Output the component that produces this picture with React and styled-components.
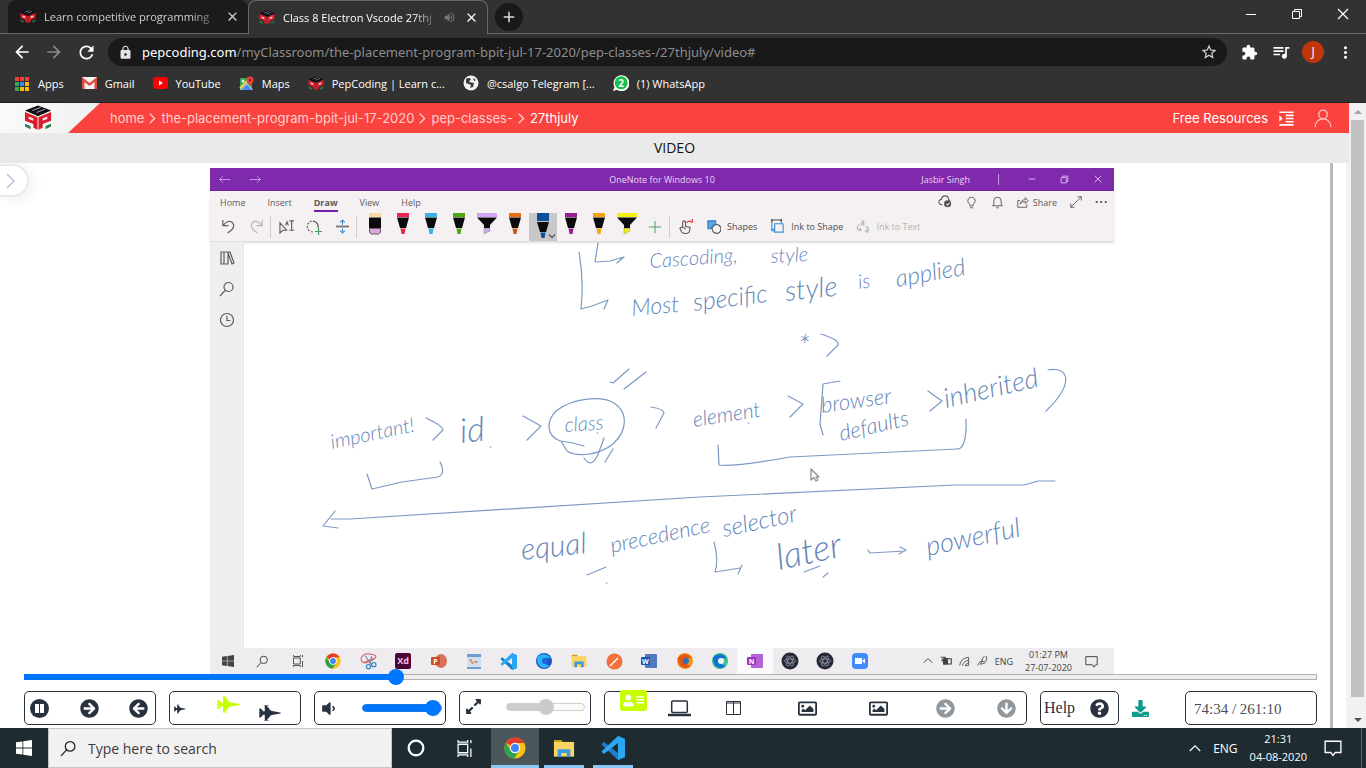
import React from "react";
import styled, { createGlobalStyle, css } from "styled-components";
import {
  MdArrowBack, MdArrowForward, MdRefresh, MdLock, MdStarBorder, MdExtension,
  MdQueueMusic, MdMoreVert, MdClose, MdAdd, MdVolumeUp, MdFormatIndentIncrease,
} from "react-icons/md";
import {
  FaFighterJet, FaArrowCircleRight, FaArrowCircleLeft, FaArrowCircleDown,
  FaQuestionCircle, FaLaptop, FaRegImage, FaAddressCard, FaVolumeDown,
  FaExpandAlt, FaDownload,
} from "react-icons/fa";

const ui = `"Open Sans", "Noto Sans", sans-serif`;
const ink = "#28323f";

const Global = createGlobalStyle`
  * { box-sizing: border-box; }
  body { margin: 0; font-family: ${ui}; font-size: 12px; background: #fff; }
  button { border: 0; padding: 0; background: none; color: inherit; font: inherit; display: flex; align-items: center; justify-content: center; }
  a { color: inherit; text-decoration: none; }
  input { font: inherit; }
  svg { display: block; flex: none; }
`;

const Screen = styled.div`
  display: flex;
  flex-direction: column;
  min-height: 100vh;
`;

/* ---------- browser chrome ---------- */
const TabStrip = styled.div`
  display: flex;
  height: 34px;
  padding-left: 8px;
  background: #323232;
  color: #dcdcdc;
  font-size: 11px;
  box-shadow: inset 0 -1px #686868;
`;
const Tab = styled.div`
  display: flex;
  align-items: center;
  width: 240px;
  padding: 0 8px 0 12px;
  gap: 8px;
  border-radius: 8px 8px 0 0;
  background: ${(p) => (p.$active ? "#323232" : "#1b1b1b")};
  color: ${(p) => (p.$active ? "#fff" : "#cfcfcf")};
  ${(p) =>
    p.$active
      ? css`border: 1px solid #686868; border-bottom: 0; padding-left: 10px;`
      : css`border-bottom: 1px solid #686868;`}
`;
const TabTitle = styled.span`
  flex: 1;
  min-width: 0;
  white-space: nowrap;
  mask-image: linear-gradient(to right, #000 85%, #0003);
`;
const NewTab = styled.button`
  width: 28px;
  height: 28px;
  margin: 3px auto 0 7px;
  border-radius: 50%;
  background: #191919;
`;
const WindowButton = styled.button`
  width: 46px;
  height: 28px;
  color: #fff;
`;
const Toolbar = styled.div`
  display: flex;
  align-items: center;
  height: 32px;
  padding: 4px 5px 0 6px;
  background: #323232;
  color: #fff;
`;
const ToolButton = styled.button`
  width: 32px;
  height: 28px;
  color: ${(p) => (p.$dim ? "#8a8a8a" : "#fff")};
`;
const Omnibox = styled.div`
  display: flex;
  align-items: center;
  flex: 1;
  height: 28px;
  margin: 0 6px;
  padding: 0 9px 0 10px;
  border-radius: 14px;
  background: #191919;
  font-family: "Noto Sans", sans-serif;
  font-size: 13px;
`;
const Domain = styled.label`
  margin-left: 9px;
`;
const UrlInput = styled.input`
  flex: 1;
  min-width: 0;
  border: 0;
  padding: 0;
  background: none;
  color: #8d8d8d;
  outline: 0;
`;
const Avatar = styled.span`
  width: 22px;
  height: 22px;
  border-radius: 50%;
  background: #bf360c;
  line-height: 22px;
  text-align: center;
`;
const Bookmarks = styled.nav`
  display: flex;
  align-items: center;
  gap: 18px;
  height: 37px;
  padding: 0 0 2px 15px;
  background: #323232;
  border-bottom: 1px solid #222;
  color: #fff;
  font-size: 11px;
`;
const Bookmark = styled.a`
  display: flex;
  align-items: center;
  gap: 8px;
`;

/* ---------- page ---------- */
const Page = styled.main`
  display: flex;
  flex: 1;
`;
const Content = styled.div`
  display: flex;
  flex-direction: column;
  flex: 1;
  min-width: 0;
`;
const SiteHeader = styled.header`
  display: flex;
  align-items: center;
  height: 30px;
  background: #fa423e;
  color: #fff;
  font-family: Inter, "Liberation Sans", sans-serif;
  font-size: 13px;
`;
const LogoArea = styled.a`
  width: 100px;
  height: 30px;
  padding: 2px 0 0 24px;
  background: linear-gradient(100deg, #fafafa, #eef0ef);
  clip-path: polygon(0 0, 100% 0, 68% 100%, 0 100%);
`;
const Crumbs = styled.nav`
  display: flex;
  align-items: center;
  gap: 3px;
  flex: 1;
  padding-left: 10px;
`;
const Crumb = styled.a`
  color: ${(p) => (p.$current ? "#fff" : "#ffcfcd")};
`;
const Resources = styled.a`
  display: flex;
  align-items: center;
  gap: 9px;
`;
const Account = styled.button`
  margin: 0 17px 0 18px;
  color: #ffc9c6;
`;
const SectionTitle = styled.h1`
  margin: 0;
  height: 30px;
  background: #eaeaea;
  color: #111;
  font-size: 14px;
  font-weight: 400;
  line-height: 30px;
  text-align: center;
`;
const Body = styled.section`
  position: relative;
  flex: 1;
  margin-right: 3px;
  padding-right: 13px;
  box-shadow: 3px 0 #f4f4f4;
`;
const Player = styled.div`
  height: 100%;
  padding: 5px 13px 3px 24px;
  border-right: 3px solid #b4bcbc;
`;
const Drawer = styled.button`
  position: absolute;
  left: 0;
  top: 1px;
  width: 29px;
  height: 33px;
  padding-right: 6px;
  border: 2px solid #e9e9e9;
  border-left: 0;
  border-radius: 0 17px 17px 0;
  background: #fff;
  box-shadow: 4px 2px 14px #0001;
  color: #b9b6cf;
`;
const Scrollbar = styled.div`
  display: flex;
  flex-direction: column;
  align-items: center;
  width: 17px;
  background: #f1f1f1;
`;
const ScrollArrow = styled.button`
  height: 17px;
  width: 17px;
  color: ${(p) => (p.$off ? "#a3a3a3" : "#505050")};
`;
const Thumb = styled.div`
  width: 13px;
  flex: 1;
  margin-bottom: 14px;
  background: #c1c1c1;
`;

/* ---------- video: the shared note window ---------- */
const VideoHolder = styled.div`
  padding-right: 17px;
`;
const Video = styled.div`
  width: 100%;
  max-width: 904px;
  margin: 0 auto;
  background: #fff;
  font-size: 9px;
  color: #5e5b5e;
`;
const NoteTitle = styled.div`
  display: grid;
  grid-template-columns: 1fr auto 1fr;
  align-items: center;
  height: 23px;
  background: #7f2aad;
  border-bottom: 1px solid #6b1f96;
  color: #ead6f4;
`;
const NoteNav = styled.div`
  display: flex;
  gap: 18px;
  padding-left: 8px;
`;
const NoteOwner = styled.div`
  display: flex;
  align-items: center;
  justify-content: flex-end;
`;
const OwnerName = styled.span`
  margin-right: 12px;
`;
const NoteWindowButton = styled.button`
  width: 33px;
  height: 22px;
`;
const TitleRule = styled.span`
  width: 1px;
  height: 11px;
  margin: 0 16px;
  background: #c79be0;
`;
const Ribbon = styled.div`
  height: 51px;
  padding-top: 1px;
  background: #f5f1f2;
  border-bottom: 1px solid #dedbdc;
  box-shadow: 0 1px 2px #0002;
`;
const RibbonTabs = styled.div`
  display: flex;
  align-items: center;
  height: 20px;
  padding: 0 7px 0 10px;
`;
const RibbonTab = styled.button`
  height: 20px;
  margin-right: 22px;
  font-weight: ${(p) => (p.$on ? 700 : 400)};
  box-shadow: ${(p) => (p.$on ? "inset 0 -2px #7719aa" : "none")};
`;
const RibbonActions = styled.div`
  display: flex;
  align-items: center;
  gap: 13px;
  margin-left: auto;
`;
const Share = styled.button`
  gap: 4px;
`;
const Tools = styled.div`
  display: flex;
  align-items: center;
  height: 29px;
  padding-left: 4px;
`;
const Tool = styled.button`
  width: 28px;
  height: 28px;
  position: relative;
  align-items: ${(p) => (p.$pen ? "flex-start" : "center")};
  background: ${(p) => (p.$on ? "#c9c7c8" : "none")};
`;
const PenMenu = styled.span`
  position: absolute;
  right: 1px;
  bottom: 1px;
`;
const ToolRule = styled.span`
  width: 1px;
  height: 22px;
  margin-right: ${(p) => (p.$wide ? 4 : 1)}px;
  background: #cfcccd;
`;
const LabelTool = styled.button`
  gap: 6px;
  margin-left: ${(p) => (p.$first ? 8 : 13)}px;
  color: ${(p) => (p.$off ? "#b5b2b3" : "#4e4b4e")};
`;
const Note = styled.div`
  display: flex;
`;
const NoteRail = styled.div`
  display: flex;
  flex-direction: column;
  align-items: center;
  gap: 15px;
  width: 34px;
  padding-top: 8px;
  background: #f0eeef;
  border-right: 1px solid #e8e6e7;
`;
const Canvas = styled.svg`
  flex: 1;
  min-width: 0;
  fill: none;
  stroke: #7c99c4;
  stroke-width: 1.2;
  stroke-linecap: round;
  stroke-linejoin: round;
`;
const Ink = styled.text`
  font: italic 300 ${(p) => p.$size}px Lato, "Liberation Sans", sans-serif;
  fill: #6486b9;
  stroke: none;
`;
const NoteTaskbar = styled.div`
  display: flex;
  align-items: center;
  height: 26px;
  background: #eeecef;
  color: #444;
`;
const NoteApps = styled.div`
  display: grid;
  grid-template-columns: repeat(19, 1fr);
  width: 668px;
`;
const NoteApp = styled.button`
  height: 26px;
  background: ${(p) => (p.$on ? "#faf9fb" : "none")};
`;
const NoteTray = styled.div`
  display: flex;
  align-items: center;
  justify-content: flex-end;
  flex: 1;
  gap: 7px;
  padding-right: 16px;
`;
const NoteClock = styled.time`
  margin: 0 6px 0 5px;
  line-height: 13px;
  text-align: center;
`;

/* ---------- player controls ---------- */
const Range = styled.input.attrs({ type: "range" })`
  appearance: none;
  display: block;
  position: relative;
  width: ${(p) => p.$width || "100%"};
  height: 16px;
  margin: ${(p) => p.$margin || 0};
  background: none;
  &::-webkit-slider-runnable-track {
    height: ${(p) => p.$track}px;
    border-radius: 4px;
    border: 1px solid ${(p) => (p.disabled ? "#cfcfcf" : "#1a76e0")};
    background: linear-gradient(to right,
      ${(p) => (p.disabled ? "#cbcbcb" : "#0075ff")} var(--fill),
      ${(p) => (p.disabled ? "#fafafa" : "#efefef")} var(--fill)) border-box;
    ${(p) => p.$mixed && css`border-image: linear-gradient(to right, #0075ff var(--fill), #b2b2b2 var(--fill)) 1;`}
  }
  &::-webkit-slider-thumb {
    appearance: none;
    width: 16px;
    height: 16px;
    margin-top: ${(p) => -(16 - p.$track) / 2 - 1}px;
    border-radius: 50%;
    background: ${(p) => (p.disabled ? "#cbcbcb" : "#0075ff")};
  }
`;
const Controls = styled.div`
  display: flex;
  gap: 13px;
  margin-top: 6px;
  color: ${ink};
`;
const Group = styled.div`
  display: flex;
  align-items: center;
  justify-content: space-between;
  width: 132px;
  height: 34px;
  padding: ${(p) => p.$pad || "0 7px 0 5px"};
  border: 1px solid ${ink};
  border-radius: 5px;
`;
const Views = styled(Group)`
  display: grid;
  grid-template-columns: 42fr 50fr 58fr 90fr 52fr 82fr 40fr;
  flex: 1;
  padding: 0 0 0 7px;
`;
const Control = styled.button`
  color: ${(p) => p.$color || "inherit"};
  align-self: ${(p) => p.$align || "center"};
  ${(p) => p.$cell && css`width: 42px;`}
  ${(p) => p.$first && css`flex: 1; justify-content: flex-start;`}
  ${(p) => p.$tab && css`margin-top: -5px;`}
`;
const HelpButton = styled.button`
  justify-content: flex-start;
  gap: 15px;
  width: 79px;
  height: 34px;
  padding: 0 3px;
  border: 1px solid ${ink};
  border-radius: 5px;
  font: 16px "Liberation Serif", serif;
`;
const Download = styled.button`
  width: 40px;
  justify-content: flex-start;
  color: #0a9b8a;
`;
const Elapsed = styled.span`
  font: 15px "Liberation Serif", serif;
  color: #4a5058;
`;

/* ---------- desktop taskbar ---------- */
const Taskbar = styled.footer`
  display: flex;
  height: 40px;
  background: #1e2c31;
  color: #fff;
`;
const TaskButton = styled.button`
  width: ${(p) => p.$w || 48}px;
  background: ${(p) => (p.$on ? "#4c575b" : "none")};
  box-shadow: ${(p) => (p.$open ? "inset 0 -3px #8cc8f5" : "none")};
  margin-left: ${(p) => p.$gap || 0}px;
`;
const Search = styled.label`
  display: flex;
  align-items: center;
  gap: 11px;
  width: 344px;
  padding-left: 11px;
  border: 1px solid #c4c4c4;
  background: #f1f1f1;
  color: #222;
  font-size: 14px;
`;
const SearchInput = styled.input`
  flex: 1;
  min-width: 0;
  border: 0;
  padding: 0;
  background: none;
  outline: 0;
  &::placeholder { color: #3c3c3c; opacity: 1; }
`;
const Tray = styled.div`
  display: flex;
  align-items: center;
  gap: 12px;
  margin-left: auto;
  padding-right: 4px;
`;
const Clock = styled.time`
  margin-right: 5px;
  font-size: 11px;
  line-height: 18px;
  text-align: center;
`;
const Edge = styled.span`
  width: 1px;
  align-self: stretch;
  margin-left: 7px;
  background: #5d686c;
`;

/* ---------- drawings ---------- */
const PepLogo = ({ size = 16 }) => (
  <svg width={size} height={size * 0.9} viewBox="0 0 30 27">
    <path d="M1 20 7 22.500V26L1 23ZM29 20 23 22.500V26L29 23Z" fill="#2f7d55" />
    <path d="M1 7.500 14.500 13V26.500L10 24.500V20.500L1 17ZM29 7.500 15.500 13V26.500L20 24.500V20.500L29 17Z" fill="#d81e2c" />
    <path d="M5 12.200 10 14.200V17L5 15ZM25 12.200 20 14.200V17L25 15Z" fill="#f6dcdd" />
    <path d="M15 .500 29 6 15 12 1 6Z" fill="#0d0c16" />
    <path d="M9 6 18 2.500M13.500 8 22.500 4.500" stroke="#b9b9bd" strokeWidth="1" />
  </svg>
);
const ChromeLogo = ({ size }) => (
  <svg width={size} height={size} viewBox="0 0 24 24">
    <circle cx="12" cy="12" r="11.500" fill="#fbc116" />
    <path d="M12 12 2 6.300A11.500 11.500 0 0 1 22 6.500L12 6.500Z" fill="#e33b2e" />
    <path d="M2 6.300A11.500 11.500 0 0 0 11 23.500L16.800 14.700 12 12 7.200 14.800Z" fill="#2ba24c" />
    <circle cx="12" cy="12" r="5.600" fill="#fff" />
    <circle cx="12" cy="12" r="4.400" fill="#4285f4" />
  </svg>
);
const CodeLogo = ({ size }) => (
  <svg width={size} height={size} viewBox="0 0 24 24">
    <path d="M17 0 24 3V21L17 24 .500 8.500 3 6 17 17Z" fill="#1c7fc8" />
    <path d="M17 7 3 18 .500 15.500 17 0 24 3V21L17 24Z" fill="#2aa6f2" />
  </svg>
);
const FolderLogo = ({ size }) => (
  <svg width={size} height={size * 0.85} viewBox="0 0 24 20">
    <path d="M1 1H9L11 4H1Z" fill="#d79a1c" />
    <path d="M1 3H23V19H1Z" fill="#fcd462" />
    <path d="M5 11H19V19.500H15V15H9V19.500H5Z" fill="#3b9ae0" />
  </svg>
);
const WindowsLogo = ({ size }) => (
  <svg width={size} height={size} viewBox="0 0 16 16" fill="currentColor">
    <path d="M0 2.300 6.500 1.400V7.600H0ZM7.300 1.300 16 0V7.600H7.300ZM0 8.400H6.500V14.600L0 13.700ZM7.300 8.400H16V16L7.300 14.700Z" />
  </svg>
);
const Line = ({ size = 14, d, w = 1.2, box = 16, color = "currentColor", children }) => (
  <svg width={size} height={size} viewBox={`0 0 ${box} ${box}`} fill="none" stroke={color} strokeWidth={w}>
    <path d={d} />
    {children}
  </svg>
);
const lens = "M9.500 1.500A4.500 4.500 0 1 0 9.500 10.500 4.500 4.500 0 0 0 9.500 1.500M6.200 9.300 1 15";
const taskView = "M2 4H11V12H2ZM2 0V2H11V0M2 16V14H11V16M14 0V3M14 8V16";
const bubble = "M1 2H15V12H10L8 14.500 6 12H1Z";
const chevron = "M4 1 11 8 4 15";

const Pen = ({ color, tip = color, wide }) => (
  <svg width="22" height="22" viewBox="0 0 22 22">
    {wide ? (
      <>
        <path d="M1 0H21V4H1Z" fill={color} />
        <path d="M1 4.500H21L14 12V15H8V12Z" fill="#0b0b0b" />
        <path d="M8 15.500H14V18L8 21Z" fill={tip} stroke="#6665" />
      </>
    ) : (
      <>
        <path d="M5 0H17V4H5Z" fill={color} />
        <path d="M5 4.500H17L14 15H8Z" fill="#0b0b0b" />
        <path d="M8.500 15.500H13.500L12.500 21H9.500Z" fill={tip} />
      </>
    )}
  </svg>
);
const ActivePen = ({ color }) => (
  <svg width="22" height="27" viewBox="0 0 22 27">
    <path d="M5 0H17V8H5Z" fill={color} />
    <path d="M5 9H17L14 19H8Z" fill="#0b0b0b" />
    <path d="M8.500 19.500H13.500L12.500 25H9.500Z" fill={color} />
  </svg>
);
const Eraser = () => (
  <svg width="22" height="22" viewBox="0 0 22 22">
    <path d="M5 0H17V4H5Z" fill="#f2dc9e" />
    <path d="M5 4.500H17V15H5Z" fill="#0b0b0b" />
    <path d="M5.500 15.500H16.500V19L15 21H7L5.500 19Z" fill="#d9a9d8" stroke="#6b5a6b" />
  </svg>
);
const Tile = ({ color, letter, round }) => (
  <svg width="16" height="16" viewBox="0 0 16 16">
    <rect x="4" y="1" width="12" height="14" rx={round ? 7 : 1} fill={color} opacity=".75" />
    <rect y="4" width="9" height="8" rx="1" fill={color} />
    <text x="4.500" y="11" fontSize="7" fontWeight="700" textAnchor="middle" fill="#fff">{letter}</text>
  </svg>
);
const Disc = ({ a, b, c }) => (
  <svg width="18" height="18" viewBox="0 0 18 18">
    <circle cx="9" cy="9" r="8" fill={a} />
    <path d="M2 6C6 0 14 2 16 7 12 5 9 6 9 9S13 14 15 13C11 18 2 17 2 6Z" fill={b} />
    <circle cx="10" cy="9" r="3" fill={c} />
  </svg>
);
const Atom = () => (
  <svg width="18" height="18" viewBox="0 0 18 18" fill="none" stroke="#8f97a8" strokeWidth=".8">
    <circle cx="9" cy="9" r="8.500" fill="#262a36" stroke="none" />
    <ellipse cx="9" cy="9" rx="5.500" ry="2.200" />
    <ellipse cx="9" cy="9" rx="5.500" ry="2.200" transform="rotate(60 9 9)" />
    <ellipse cx="9" cy="9" rx="5.500" ry="2.200" transform="rotate(120 9 9)" />
  </svg>
);
const Restore = ({ size }) => <Line size={size} box={12} w={1} d="M1.500 3.500H8.500V10.500H1.500ZM3.500 3.500V1.500H10.500V8.500H8.500" />;

const appDots = [
  ["#ea4335", "#ea4335", "#ea4335"],
  ["#34a853", "#4285f4", "#fbbc05"],
  ["#34a853", "#fbbc05", "#fbbc05"],
];

/* handwritten words: text, x, baseline, slope, size */
const words = [
  ["Cascoding,", 650, 268, -4, 20], ["style", 771, 263, -3, 20],
  ["Most", 632, 316, -5, 23], ["specific", 694, 311, -7, 25], ["style", 786, 301, -6, 28],
  ["is", 859, 289, -8, 20], ["applied", 897, 287, -10, 24], ["*", 798, 356, 0, 30],
  ["important!", 332, 449, -12, 20], ["id", 461, 443, -6, 34], ["class", 565, 432, -4, 20],
  ["element", 694, 427, -9, 21], ["browser", 822, 413, -8, 22], ["defaults", 841, 441, -13, 22],
  ["inherited", 946, 408, -13, 27], ["equal", 522, 560, -6, 30],
  ["precedence", 612, 553, -12, 22], ["selector", 724, 537, -12, 24],
  ["later", 779, 570, -12, 36], ["powerful", 928, 556, -12, 27],
];

const strokes = [
  "M579 252Q584 280 581 309L592 306 608 300 604 309",
  "M598 243 595 262 610 261 624 257 617 263",
  "M821 334Q840 340 838 345L827 356",
  "M610 382 613 383 629 369M624 389 646 372",
  "M426 418Q443 426 443 430L433 440M523 416 541 426 527 440",
  "M560 441C545 435 547 420 556 411 574 397 602 396 614 403 628 412 628 430 613 444 598 456 576 457 567 451L561 441M560 441Q572 442 584 446",
  "M584 458Q592 470 599 452L604 438M605 462 613 449",
  "M651 407Q664 409 664 413L656 428M788 396 803 404 790 417",
  "M840 381 823 384 820 424 823 435",
  "M928 391 942 401 930 411",
  "M1048 370C1070 366 1074 384 1046 411",
  "M367 474 372 489 402 482 438 477Q446 474 440 462",
  "M718 445 719 465Q735 467 790 457L957 449Q967 449 966 419",
  "M1055 481H1038L1024 485H955L700 497 350 519 331 519M335 511 323 526 338 528",
  "M587 575 606 567M606 583H607M490 447H491M597 433H598M748 423H749",
  "M714 542Q719 560 715 572L740 568M742 565 738 574",
  "M804 572 820 566M823 577 828 573",
  "M868 550 870 553 905 551M900 547 906 550 899 554",
];

export default function App() {
  return (
    <Screen>
      <Global />
      <TabStrip>
        <Tab>
          <PepLogo />
          <TabTitle>Learn competitive programming</TabTitle>
          <button aria-label="Close tab"><MdClose size={15} /></button>
        </Tab>
        <Tab $active>
          <PepLogo />
          <TabTitle>Class 8 Electron Vscode 27thj</TabTitle>
          <MdVolumeUp size={13} color="#777" />
          <button aria-label="Close tab"><MdClose size={15} /></button>
        </Tab>
        <NewTab aria-label="New tab"><MdAdd size={18} /></NewTab>
        <WindowButton aria-label="Minimize"><Line size={12} box={12} w={1} d="M1 6.500H11" /></WindowButton>
        <WindowButton aria-label="Restore"><Restore size={12} /></WindowButton>
        <WindowButton aria-label="Close"><Line size={12} box={12} d="M1 1 11 11M11 1 1 11" /></WindowButton>
      </TabStrip>
      <Toolbar>
        <ToolButton aria-label="Back"><MdArrowBack size={20} /></ToolButton>
        <ToolButton $dim aria-label="Forward"><MdArrowForward size={20} /></ToolButton>
        <ToolButton aria-label="Reload"><MdRefresh size={21} /></ToolButton>
        <Omnibox>
          <MdLock size={15} color="#e4e4e4" />
          <Domain htmlFor="url">pepcoding.com</Domain>
          <UrlInput id="url" defaultValue="/myClassroom/the-placement-program-bpit-jul-17-2020/pep-classes-/27thjuly/video#" />
          <button aria-label="Bookmark this page"><MdStarBorder size={18} color="#d5d5d5" /></button>
        </Omnibox>
        <ToolButton aria-label="Extensions"><MdExtension size={17} /></ToolButton>
        <ToolButton aria-label="Media"><MdQueueMusic size={20} /></ToolButton>
        <ToolButton aria-label="Profile"><Avatar>J</Avatar></ToolButton>
        <ToolButton aria-label="Menu"><MdMoreVert size={19} /></ToolButton>
      </Toolbar>
      <Bookmarks>
        <Bookmark href="#">
          <svg width="15" height="15" viewBox="0 0 15 15">
            {appDots.map((row, r) =>
              row.map((fill, k) => (
                <rect key={`${r}${k}`} x={k * 5} y={1 + r * 5} width="4" height="4" fill={fill} />
              )))}
          </svg>
          Apps
        </Bookmark>
        <Bookmark href="#">
          <svg width="15" height="12" viewBox="0 0 15 12">
            <path d="M0 0H15V12H0Z" fill="#f2f2f2" />
            <path d="M0 12V0L7.500 6 15 0V12H12.500V5L7.500 9 2.500 5V12Z" fill="#e04a3f" />
          </svg>
          Gmail
        </Bookmark>
        <Bookmark href="#">
          <svg width="15" height="12" viewBox="0 0 15 12">
            <rect width="15" height="12" rx="3" fill="#f00" /><path d="M6 3.500 10 6 6 8.500Z" fill="#fff" />
          </svg>
          YouTube
        </Bookmark>
        <Bookmark href="#">
          <svg width="15" height="15" viewBox="0 0 15 15">
            <path d="M1 2H13V14H1Z" fill="#34a05a" /><path d="M1 14 8 7 14 14Z" fill="#e9e9e9" />
            <path d="M2 14 8 8 13 14Z" fill="#4c8bf5" /><path d="M1 12 10 3" stroke="#f6d24b" strokeWidth="2" />
            <circle cx="11" cy="4" r="3.500" fill="#e5443a" /><path d="M8 6H14L11 10Z" fill="#e5443a" />
            <circle cx="11" cy="4" r="1.200" fill="#8b1a14" /><circle cx="4" cy="5" r="1.500" fill="#dff0e4" />
          </svg>
          Maps
        </Bookmark>
        <Bookmark href="#"><PepLogo />PepCoding | Learn c...</Bookmark>
        <Bookmark href="#">
          <svg width="16" height="16" viewBox="0 0 16 16">
            <circle cx="8" cy="8" r="7.500" fill="#f1f1f1" />
            <path d="M3 4Q6 2 8 4L6 7 11 8 10 12 7 13 8 10 3 8ZM10 3 13 5 11 6Z" fill="#3b3b3b" />
          </svg>
          @csalgo Telegram [...
        </Bookmark>
        <Bookmark href="#">
          <svg width="16" height="16" viewBox="0 0 16 16">
            <path d="M0 16 1.500 12A8 8 0 1 1 4 14.800Z" fill="#fff" />
            <circle cx="8.200" cy="7.800" r="6.500" fill="#19bf4c" />
            <text x="8.200" y="11.500" fontSize="10" fontWeight="700" textAnchor="middle" fill="#fff">2</text>
          </svg>
          (1) WhatsApp
        </Bookmark>
      </Bookmarks>

      <Page>
        <Content>
          <SiteHeader>
            <LogoArea href="#" aria-label="PepCoding"><PepLogo size={28} /></LogoArea>
            <Crumbs>
              <Crumb href="#">home</Crumb>
              <Line size={11} color="#ffcfcd" w={2} d={chevron} />
              <Crumb href="#">the-placement-program-bpit-jul-17-2020</Crumb>
              <Line size={11} color="#ffcfcd" w={2} d={chevron} />
              <Crumb href="#">pep-classes-</Crumb>
              <Line size={11} color="#ffcfcd" w={2} d={chevron} />
              <Crumb href="#" $current>27thjuly</Crumb>
            </Crumbs>
            <Resources href="#">Free Resources <MdFormatIndentIncrease size={19} /></Resources>
            <Account aria-label="Account">
              <Line size={18} w={1.1} d="M8 1A3.800 3.800 0 1 0 8 8.600 3.800 3.800 0 0 0 8 1M1 16C1 6.300 15 6.300 15 16" />
            </Account>
          </SiteHeader>
          <SectionTitle>VIDEO</SectionTitle>
          <Body>
            <Drawer aria-label="Open drawer"><Line size={16} w={1.2} d={chevron} /></Drawer>
            <Player>
              <VideoHolder>
                <Video>
                  <NoteTitle>
                    <NoteNav>
                      <Line size={13} color="#c79be0" d="M15 8H2M6 4 2 8 6 12" />
                      <Line size={13} color="#c79be0" d="M1 8H14M10 4 14 8 10 12" />
                    </NoteNav>
                    <span>OneNote for Windows 10</span>
                    <NoteOwner>
                      <OwnerName>Jasbir Singh</OwnerName>
                      <TitleRule />
                      <NoteWindowButton aria-label="Minimize note"><Line size={8} box={12} d="M1 6H11" /></NoteWindowButton>
                      <NoteWindowButton aria-label="Restore note"><Restore size={9} /></NoteWindowButton>
                      <NoteWindowButton aria-label="Close note"><Line size={8} box={12} d="M1 1 11 11M11 1 1 11" /></NoteWindowButton>
                    </NoteOwner>
                  </NoteTitle>
                  <Ribbon>
                    <RibbonTabs>
                      {["Home", "Insert", "Draw", "View", "Help"].map((t) => (
                        <RibbonTab key={t} $on={t === "Draw"}>{t}</RibbonTab>
                      ))}
                      <RibbonActions>
                        <Line d="M5 11H4A3 3 0 0 1 4 5 4 4 0 0 1 12 5L14 7"><circle cx="11" cy="10" r="3.500" fill="#444" /><path d="M9.500 10 11 11.500 13 9" stroke="#fff" /></Line>
                        <Line size={13} d="M6 12V10A4.500 4.500 0 1 1 10 10V12ZM6 14.500H10" />
                        <Line size={13} d="M2 12H14L12.500 10V6A4.500 4.500 0 0 0 3.500 6V10ZM6.500 14.500H9.500" />
                        <Share><Line size={12} d="M4 6H1V15H13V11M4 11Q5 5 11 5V2L15 6.500 11 10V7.500Q6 7 4 11" />Share</Share>
                        <Line size={12} d="M1 15 15 1M10 1H15V6M1 10V15H6" />
                        <Line size={12} w={2.5} d="M1 8H3.500M7 8H9.500M13 8H15.500" />
                      </RibbonActions>
                    </RibbonTabs>
                    <Tools>
                      <Tool aria-label="Undo"><Line size={15} d="M2 1V7H8M2 7Q8 0 12.500 4 15 8 11 12L7 15" /></Tool>
                      <Tool aria-label="Redo"><Line size={15} color="#b5b2b3" d="M14 1V7H8M14 7Q8 0 3.500 4 1 8 5 12L9 15" /></Tool>
                      <ToolRule />
                      <Tool aria-label="Select text"><Line size={15} d="M1 4V15L4 12H8ZM11 2H16M11 12H16M13.500 2V12M7 7 8.500 3 10 7" /></Tool>
                      <Tool aria-label="Lasso"><Line size={16} d="M12 9A5.500 5.500 0 1 0 7 13"><path d="M7 1.500A5.500 5.500 0 0 0 7 13" stroke="#f5f1f2" strokeWidth="2" strokeDasharray="1.500 2" /><path d="M12.500 9V16M9 12.500H16" stroke="#3a9a5c" /></Line></Tool>
                      <Tool aria-label="Insert space"><Line size={15} color="#3d8fd1" d="M8 6V1M5.500 3.500 8 1 10.500 3.500M8 10V15M5.500 12.500 8 15 10.500 12.500"><path d="M1 8H15" stroke="#777" strokeWidth="2" /></Line></Tool>
                      <ToolRule $wide />
                      <Tool $pen aria-label="Eraser"><Eraser /></Tool>
                      <Tool $pen aria-label="Red pen"><Pen color="#e8284f" /></Tool>
                      <Tool $pen aria-label="Blue pen"><Pen color="#35b1f0" /></Tool>
                      <Tool $pen aria-label="Green pen"><Pen color="#4fa80e" /></Tool>
                      <Tool $pen aria-label="Lilac highlighter"><Pen color="#cfa5f5" tip="#c9a9ea" wide /></Tool>
                      <Tool $pen aria-label="Orange pen"><Pen color="#f06d0c" tip="#c75a14" /></Tool>
                      <Tool $pen $on aria-label="Navy pen">
                        <ActivePen color="#0b4f94" />
                        <PenMenu><Line size={8} w={2.5} d="M2 5 8 11 14 5" /></PenMenu>
                      </Tool>
                      <Tool $pen aria-label="Purple pen"><Pen color="#9c1c96" /></Tool>
                      <Tool $pen aria-label="Amber pen"><Pen color="#f2a50f" /></Tool>
                      <Tool $pen aria-label="Yellow highlighter"><Pen color="#f7f10a" wide /></Tool>
                      <Tool aria-label="Add pen"><Line size={14} color="#4fa56d" d="M8 1V15M1 8H15" /></Tool>
                      <ToolRule />
                      <Tool aria-label="Draw with touch"><Line size={15} d="M5 8V3Q7 1 8 3V8L13 9 12 14Q8 17 4 14L2 10Q5 7 8 11"><path d="M9 4Q12 1 14 3T15 0" stroke="#e03a3a" /></Line></Tool>
                      <LabelTool $first>
                        <Line size={14} d="M6 10A5 5 0 1 1 6 10.500"><path d="M1 1H10V5Q5 6 5 10H1Z" fill="#5aa9e6" stroke="#2f79bd" /></Line>
                        Shapes
                      </LabelTool>
                      <LabelTool>
                        <Line size={15} color="#3d8fd1" d="M5 5H14V14H5ZM2 4V11M5 11H1M1 11Q3 14 5 12"><path d="M1 1H13M2 0V4M12 0V4" stroke="#444" /></Line>
                        Ink to Shape
                      </LabelTool>
                      <LabelTool $off>
                        <Line size={14} d="M6 1Q9 0 9 3V6M9 3Q5 3 6 5T9 5M11 8Q14 7 14 10V14M14 11Q10 11 11 13T14 13M4 5Q0 8 2 11H6M4 9 6 11 4 13" />
                        Ink to Text
                      </LabelTool>
                    </Tools>
                  </Ribbon>
                  <Note>
                    <NoteRail>
                      <Line size={16} d="M2 2H5V14H2ZM5 2H9V14H5ZM9 3 11 2 15 13 13 14Z" />
                      <Line size={16} d={lens} />
                      <Line size={16} d="M8 1.500A6.500 6.500 0 1 0 8 14.500 6.500 6.500 0 0 0 8 1.500M8 4V8.500H11.500" />
                    </NoteRail>
                    <Canvas viewBox="244 242 870 406">
                      {strokes.map((d) => <path key={d} d={d} />)}
                      {words.map(([t, x, y, a, s]) => (
                        <Ink key={`${t}${x}`} x={x} y={y} $size={s} transform={`rotate(${a} ${x} ${y})`}>{t}</Ink>
                      ))}
                      <path d="M811 469V480L814 477.500 816 481 818 480 816 477H819Z" fill="#fff" stroke="#8a8a8a" />
                    </Canvas>
                  </Note>
                  <NoteTaskbar>
                    <NoteApps>
                      <NoteApp aria-label="Start"><WindowsLogo size={12} /></NoteApp>
                      <NoteApp aria-label="Search"><Line size={13} d={lens} /></NoteApp>
                      <NoteApp aria-label="Task view"><Line size={12} d={taskView} /></NoteApp>
                      <NoteApp aria-label="Chrome"><ChromeLogo size={16} /></NoteApp>
                      <NoteApp aria-label="Snip">
                        <Line size={17} color="#d9737c" d="M1 5Q3 0 10 1T14 5 6 9 1 5M3 9 13 5"><path d="M5 3 11 11M11 3 9 11" stroke="#8a8fa0" /><circle cx="8" cy="13" r="2" stroke="#3586c4" /><circle cx="13" cy="11" r="2" stroke="#3586c4" /></Line>
                      </NoteApp>
                      <NoteApp aria-label="XD">
                        <svg width="16" height="16" viewBox="0 0 16 16"><rect width="16" height="16" rx="2" fill="#4b0637" /><text x="8" y="11" fontSize="9" fontWeight="700" textAnchor="middle" fill="#fbb8ee">Xd</text></svg>
                      </NoteApp>
                      <NoteApp aria-label="PowerPoint"><Tile color="#cf4a26" letter="P" round /></NoteApp>
                      <NoteApp aria-label="Notepad">
                        <svg width="16" height="16" viewBox="0 0 16 16"><rect x="1" y="1" width="14" height="15" fill="#cfe0f3" /><path d="M1 1H15V4H1ZM1 14H15V16H1Z" fill="#6e9bd0" /><path d="M4 6 7 11M8 9H12" stroke="#d58a4a" strokeWidth="1.500" /></svg>
                      </NoteApp>
                      <NoteApp aria-label="Code"><CodeLogo size={17} /></NoteApp>
                      <NoteApp aria-label="Firefox developer"><Disc a="#1d4fc4" b="#27b6f5" c="#1c66d8" /></NoteApp>
                      <NoteApp aria-label="Explorer"><FolderLogo size={16} /></NoteApp>
                      <NoteApp aria-label="Postman">
                        <svg width="17" height="17" viewBox="0 0 17 17"><circle cx="8.500" cy="8.500" r="8" fill="#f3703a" /><path d="M4 13 12 5" stroke="#fff" strokeWidth="1.500" /></svg>
                      </NoteApp>
                      <NoteApp aria-label="Word"><Tile color="#1c53ae" letter="W" /></NoteApp>
                      <NoteApp aria-label="Firefox"><Disc a="#f39a1b" b="#e2541a" c="#2c6fb8" /></NoteApp>
                      <NoteApp aria-label="Edge"><Disc a="#3bc48d" b="#1272cf" c="#eef6f8" /></NoteApp>
                      <NoteApp $on aria-label="OneNote"><Tile color="#9a33c4" letter="N" /></NoteApp>
                      <NoteApp aria-label="Electron"><Atom /></NoteApp>
                      <NoteApp aria-label="Electron app"><Atom /></NoteApp>
                      <NoteApp aria-label="Zoom">
                        <svg width="16" height="16" viewBox="0 0 16 16"><rect width="16" height="16" rx="4" fill="#3f8cfa" /><path d="M3 5H10V11H3ZM10.500 7.500 13 5.500V10.500L10.500 8.500Z" fill="#fff" /></svg>
                      </NoteApp>
                    </NoteApps>
                    <NoteTray>
                      <Line size={10} w={1.5} d="M1 11 8 4 15 11" />
                      <Line size={12} w={1.5} d="M5 5H15V12H5ZM1 3H7V8H3V5"><path d="M5 5H10V12H5Z" fill="currentColor" /></Line>
                      <Line size={11} d="M1 14Q2 3 14 2M5 14Q6 8 14 6M9 14Q10 11 14 10M14 2V14H9" />
                      <Line size={11} d="M1 14Q4 6 9 8T14 3 9 2L5 12 12 10" />
                      <span>ENG</span>
                      <NoteClock>01:27 PM<br />27-07-2020</NoteClock>
                      <Line size={13} d="M1 2H15V12H13L11 15 9 12H1Z" />
                    </NoteTray>
                  </NoteTaskbar>
                </Video>
              </VideoHolder>
              <Range aria-label="Playback position" $track={6} $mixed $margin="-5px 0 0" defaultValue="28.5" step="0.1" style={{ "--fill": "28.5%" }} />
              <Controls>
                <Group>
                  <Control aria-label="Pause">
                    <svg width="19" height="19" viewBox="0 0 19 19"><circle cx="9.500" cy="9.500" r="9.500" fill={ink} /><path d="M5 5H9V14H5ZM10 5H14V14H10Z" fill="#fff" /></svg>
                  </Control>
                  <Control aria-label="Forward"><FaArrowCircleRight size={19} /></Control>
                  <Control aria-label="Rewind"><FaArrowCircleLeft size={19} /></Control>
                </Group>
                <Group $pad="1px 9px 0 4px">
                  <Control $first aria-label="Slow"><FaFighterJet size={12} /></Control>
                  <Control $cell $color="#c6ff00" $align="flex-start" aria-label="Normal speed"><FaFighterJet size={23} /></Control>
                  <Control $cell $align="flex-end" aria-label="Fast"><FaFighterJet size={22} /></Control>
                </Group>
                <Group $pad="0 3px 0 5px">
                  <Control aria-label="Mute"><FaVolumeDown size={17} /></Control>
                  <Range aria-label="Volume" $track={8} $width="80px" defaultValue="100" style={{ "--fill": "95%" }} />
                </Group>
                <Group $pad="0 5px 3px">
                  <Control aria-label="Expand"><FaExpandAlt size={17} /></Control>
                  <Range aria-label="Zoom" disabled $track={8} $width="79px" defaultValue="50" style={{ "--fill": "50%" }} />
                </Group>
                <Views>
                  <Control $tab $color="#c6ff00" $align="flex-start" aria-label="Camera"><FaAddressCard size={27} /></Control>
                  <Control aria-label="Screen">
                    <svg width="23" height="17" viewBox="0 0 23 17" fill="none" stroke={ink} strokeWidth="1.500"><rect x="3.700" y="1" width="15.600" height="11.500" rx="1" /><path d="M0 15H23" strokeWidth="2.500" /></svg>
                  </Control>
                  <Control aria-label="Split">
                    <svg width="15" height="14" viewBox="0 0 15 14" fill="none" stroke={ink}><path d="M.500.500H14.500V13.500H.500ZM7.500 1V13M0 2H15" /></svg>
                  </Control>
                  <Control aria-label="Picture"><FaRegImage size={19} /></Control>
                  <Control aria-label="Gallery"><FaRegImage size={19} /></Control>
                  <Control $color="#90979d" aria-label="Next"><FaArrowCircleRight size={19} /></Control>
                  <Control $color="#90979d" aria-label="Down"><FaArrowCircleDown size={19} /></Control>
                </Views>
                <HelpButton>Help <FaQuestionCircle size={19} /></HelpButton>
                <Download aria-label="Download"><FaDownload size={17} /></Download>
                <Group $pad="2px 8px 0"><Elapsed>74:34 / 261:10</Elapsed></Group>
              </Controls>
            </Player>
          </Body>
        </Content>
        <Scrollbar>
          <ScrollArrow $off aria-label="Scroll up"><svg width="8" height="4" viewBox="0 0 8 4"><path d="M0 4 4 0 8 4Z" fill="currentColor" /></svg></ScrollArrow>
          <Thumb />
          <ScrollArrow aria-label="Scroll down"><svg width="8" height="4" viewBox="0 0 8 4"><path d="M0 0 4 4 8 0Z" fill="currentColor" /></svg></ScrollArrow>
        </Scrollbar>
      </Page>

      <Taskbar>
        <TaskButton aria-label="Start"><WindowsLogo size={16} /></TaskButton>
        <Search>
          <Line size={17} d={lens} />
          <SearchInput placeholder="Type here to search" />
        </Search>
        <TaskButton aria-label="Cortana"><Line size={18} w={2} d="M8 1.500A6.500 6.500 0 1 0 8 14.500 6.500 6.500 0 0 0 8 1.500" /></TaskButton>
        <TaskButton aria-label="Task view"><Line size={17} d={taskView} /></TaskButton>
        <TaskButton $on $open $gap={3} aria-label="Chrome"><ChromeLogo size={22} /></TaskButton>
        <TaskButton $open $w={40} $gap={5} aria-label="Explorer"><FolderLogo size={22} /></TaskButton>
        <TaskButton $open $w={40} $gap={9} aria-label="Code"><CodeLogo size={24} /></TaskButton>
        <Tray>
          <Line size={12} w={1.5} d="M1 12 8 5 15 12" />
          <span>ENG</span>
          <Clock>21:31<br />04-08-2020</Clock>
          <button aria-label="Notifications"><Line size={18} d={bubble} /></button>
          <Edge />
        </Tray>
      </Taskbar>
    </Screen>
  );
}
